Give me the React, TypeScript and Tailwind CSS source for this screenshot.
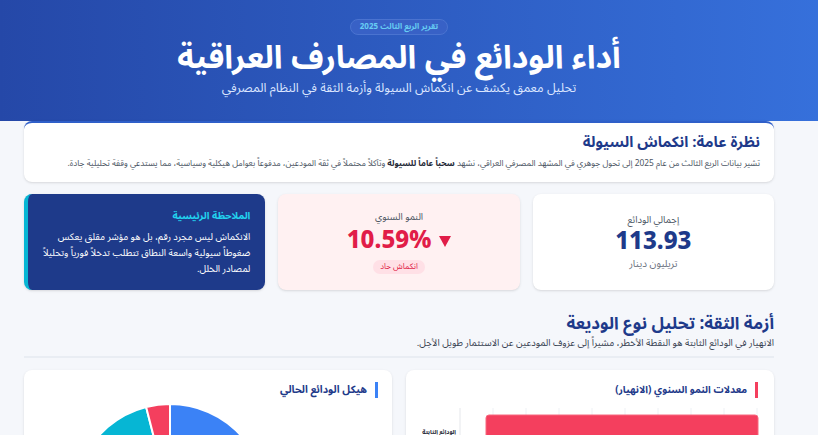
import React from "react";

const font = { fontFamily: '"Noto Sans Arabic", "DejaVu Sans", "Noto Sans", sans-serif' };

const Pie = () => {
  const cx = 146;
  const cy = 96;
  const r = 96;
  const slices = [
    { v: 0.55, c: "#3b82f6" },
    { v: 0.1, c: "#1e3a8a" },
    { v: 0.31, c: "#06b6d4" },
    { v: 0.04, c: "#f43f5e" },
  ];
  let a0 = -Math.PI / 2;
  return (
    <svg width="368" height="200" className="block">
      {slices.map((s, i) => {
        const a1 = a0 + s.v * Math.PI * 2;
        const x0 = cx + r * Math.cos(a0);
        const y0 = cy + r * Math.sin(a0);
        const x1 = cx + r * Math.cos(a1);
        const y1 = cy + r * Math.sin(a1);
        const large = s.v > 0.5 ? 1 : 0;
        const d = `M${cx} ${cy} L${x0} ${y0} A${r} ${r} 0 ${large} 1 ${x1} ${y1} Z`;
        a0 = a1;
        return <path key={i} d={d} fill={s.c} stroke="#fff" strokeWidth="2" />;
      })}
    </svg>
  );
};

const Bars = () => (
  <svg width="368" height="80" className="block" dir="ltr">
    <line x1="54" y1="10" x2="54" y2="80" stroke="#e5e7eb" />
    {[0, 1, 2, 3, 4, 5, 6, 7, 8].map((i) => (
      <line key={i} x1={87 + i * 33} y1="10" x2={87 + i * 33} y2="80" stroke="#eef1f5" />
    ))}
    <rect x="80" y="17" width="272" height="70" rx="3" fill="#f43f5e" stroke="#f7687f" />
  </svg>
);

export default function App() {
  return (
    <div dir="rtl" style={font} className="min-h-screen bg-[#f5f7fb] text-[#1f2937]">
      <header className="h-[121px] bg-linear-to-r from-[#2548a8] to-[#3670db] flex flex-col items-center pt-[19px] pr-5">
        <span className="rounded-full border border-[#4a73d0] bg-[#3861c6] px-[9px] py-[1px] text-[8px] font-bold leading-[12px] text-[#67cdf3]">
          تقرير الربع الثالث 2025
        </span>
        <h1 className="mt-[3px] text-[32px] font-bold leading-[40px] text-white">
          أداء الودائع في المصارف العراقية
        </h1>
        <p className="mt-[1px] text-[12.5px] leading-[18px] text-[#dbe6ff]">
          تحليل معمق يكشف عن انكماش السيولة وأزمة الثقة في النظام المصرفي
        </p>
      </header>

      <main className="mr-[44px] ml-6">
        <section className="h-[61px] rounded-lg border-t-2 border-[#2f5fc9] bg-white px-[14px] pt-[9px] shadow-sm">
          <h2 className="text-[15px] font-bold leading-[20px] text-[#1e3a8a]">نظرة عامة: انكماش السيولة</h2>
          <p className="mt-[4px] whitespace-nowrap text-[8.4px] leading-[14px] text-[#4b5563]">
            تشير بيانات الربع الثالث من عام 2025 إلى تحول جوهري في المشهد المصرفي العراقي، نشهد{" "}
            <b className="text-[#1f2937]">سحباً عاماً للسيولة</b> وتآكلاً محتملاً في ثقة المودعين، مدفوعاً بعوامل هيكلية
            وسياسية، مما يستدعي وقفة تحليلية جادة.
          </p>
        </section>

        <section className="mt-3 grid grid-cols-3 gap-[13px]">
          <div className="flex h-[96px] flex-col items-center justify-center rounded-lg bg-white shadow-sm">
            <span className="text-[9.5px] leading-[14px] text-[#4b5563]">إجمالي الودائع</span>
            <span className="text-[24px] font-extrabold leading-[30px] text-[#1e3a8a]" dir="ltr">113.93</span>
            <span className="text-[10px] leading-[14px] text-[#6b7280]">تريليون دينار</span>
          </div>
          <div className="flex h-[96px] flex-col items-center justify-center rounded-lg bg-[#fff1f2] shadow-sm">
            <span className="text-[9.5px] leading-[14px] text-[#4b5563]">النمو السنوي</span>
            <span className="mt-[2px] flex items-center gap-2 text-[24px] font-extrabold leading-[30px] text-[#e11d48]" dir="ltr">
              10.59%
              <svg width="12" height="11" viewBox="0 0 12 11"><path d="M0 0h12L6 11z" fill="#e11d48" /></svg>
            </span>
            <span className="mt-[4px] rounded-full bg-[#ffe0e6] px-[7px] py-[1px] text-[8px] leading-[12px] text-[#e11d48]">انكماش حاد</span>
          </div>
          <div className="flex h-[96px] flex-col rounded-lg border-l-4 border-[#06b6d4] bg-[#1e3a8a] px-[15px] pt-[15px] shadow-sm">
            <span className="text-[10px] font-bold leading-[14px] text-[#22d3ee]">الملاحظة الرئيسية</span>
            <p className="mt-[6px] text-[9.5px] leading-[16px] text-white">
              الانكماش ليس مجرد رقم، بل هو مؤشر مقلق يعكس ضغوطاً سيولية واسعة النطاق تتطلب تدخلاً فورياً وتحليلاً
              لمصادر الخلل.
            </p>
          </div>
        </section>

        <section className="mt-[22px] border-b-2 border-[#e9edf3] pb-[6px]">
          <h2 className="text-[17px] font-bold leading-[24px] text-[#1e3a8a]">أزمة الثقة: تحليل نوع الوديعة</h2>
          <p className="text-[9.5px] leading-[14px] text-[#374151]">
            الانهيار في الودائع الثابتة هو النقطة الأخطر، مشيراً إلى عزوف المودعين عن الاستثمار طويل الأجل.
          </p>
        </section>

        <section className="mt-[12px] grid grid-cols-2 gap-[14px]">
          <div className="overflow-hidden rounded-lg bg-white pt-[12px] shadow-sm">
            <div className="mr-[16px] flex items-center border-r-[3px] border-[#f43f5e] pr-[8px]">
              <h3 className="text-[10px] font-bold leading-[16px] text-[#1e3a8a]">معدلات النمو السنوي (الانهيار)</h3>
            </div>
            <div className="relative">
              <Bars />
              <span className="absolute right-[318px] top-[30px] whitespace-nowrap text-[6px] font-bold text-[#1f2937]">الودائع الثابتة</span>
            </div>
          </div>
          <div className="overflow-hidden rounded-lg bg-white pt-[12px] shadow-sm">
            <div className="mr-[14px] flex items-center border-r-[3px] border-[#3b82f6] pr-[8px]">
              <h3 className="text-[10.5px] font-bold leading-[16px] text-[#1e3a8a]">هيكل الودائع الحالي</h3>
            </div>
            <div className="mt-[6px]" dir="ltr">
              <Pie />
            </div>
          </div>
        </section>
      </main>
    </div>
  );
}
